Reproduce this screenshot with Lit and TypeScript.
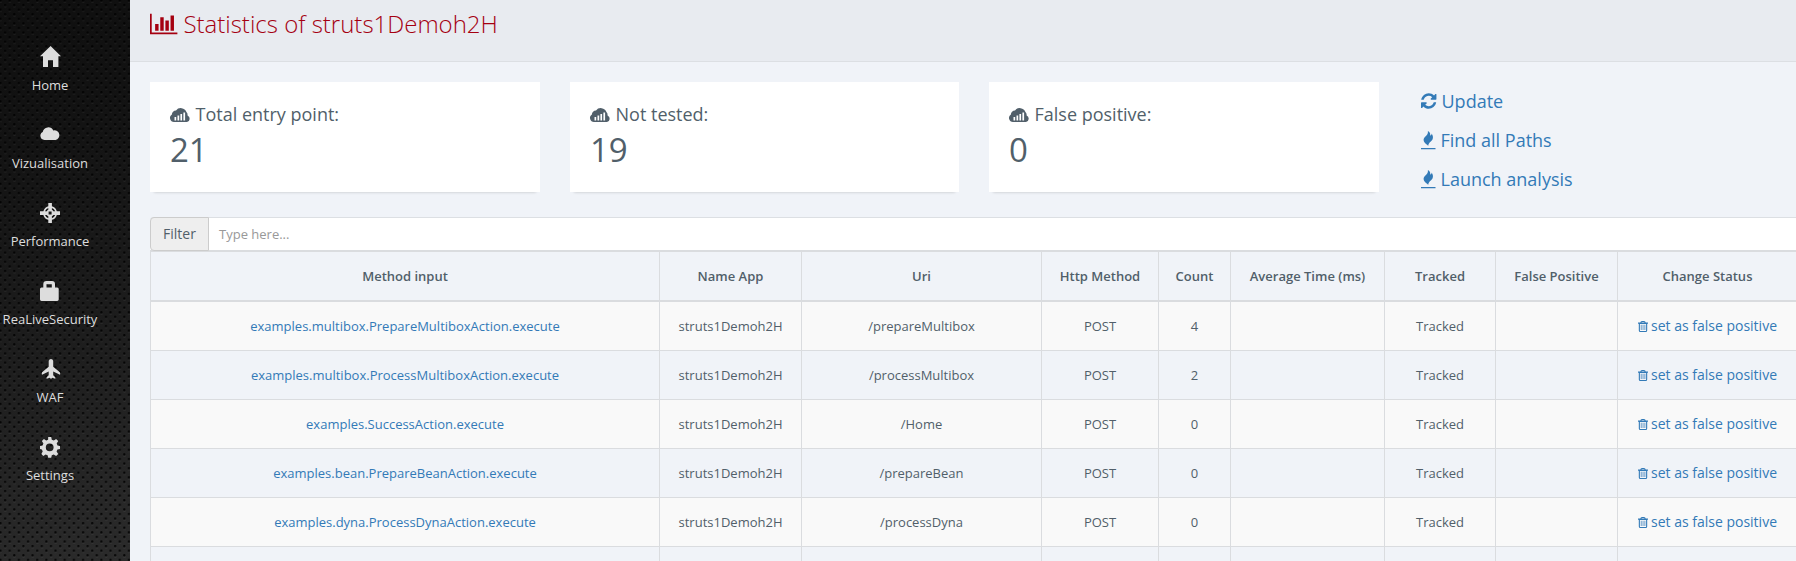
import { LitElement, html, css, svg } from "lit";
import { customElement, property } from "lit/decorators.js";

const icons: Record<string, any> = {
  home: svg`<path d="M10.6 0 L21 10.2 H18.4 V21 H13 V14.2 H8 V21 H3 V10.2 H0 Z"/>`,
  cloud: svg`<path d="M4.4 16 A4.300 4.300 0 0 1 2.700 7.900 A5.700 5.700 0 0 1 13.300 6.400 A4.900 4.900 0 1 1 15.600 16 Z"/>`,
  target: svg`<path fill-rule="evenodd" d="M8.3 0h3.6v3.3a7 7 0 0 1 4.9 4.9H20v3.7h-3.2a7 7 0 0 1-4.9 4.9V20H8.3v-3.2a7 7 0 0 1-4.9-4.9H0V8.2h3.4a7 7 0 0 1 4.9-4.9zM8.3 5a5.4 5.4 0 0 0-3.3 3.2h1.8A3.6 3.6 0 0 1 8.3 6.8zM11.9 5v1.8a3.6 3.6 0 0 1 1.4 1.4h1.9A5.4 5.4 0 0 0 11.9 5zM5 11.9a5.4 5.4 0 0 0 3.3 3.3v-1.9a3.6 3.6 0 0 1-1.5-1.4zM13.3 11.9a3.6 3.6 0 0 1-1.4 1.4v1.9a5.4 5.4 0 0 0 3.3-3.3zM8.6 8.6v3h3v-3z"/>`,
  lock: svg`<path fill-rule="evenodd" d="M3.3 6.5V3.2Q3.3 0 6.5 0H12Q15 0 15 3.2V6.5H17.2Q18.7 6.5 18.7 8V18.6Q18.7 20 17.2 20H1.5Q0 20 0 18.6V8Q0 6.5 1.5 6.5ZM6.5 3.3V6.5H11.8V3.3Z"/>`,
  plane: svg`<path d="M8.7 1.8Q9.2 0 11 0T13.2 1.8V7.8L19.8 13.2Q20.6 14.6 20 15.8L13.2 12.5V16.2L15.3 18.3V19.8L12.2 18.8 11 20 9.8 18.8 6.6 19.8V18.3L8.7 16.2V12.5L2 15.8Q1.4 14.6 2.1 13.2L8.7 7.8Z"/>`,
  cog: svg`<path fill-rule="evenodd" d="M8.2 0h3l.6 2.7 2 .9 2.3-1.6 2.1 2.1-1.5 2.4.8 1.9 2.5.6v3l-2.6.6-.8 2 1.6 2.3-2.1 2.1-2.4-1.500-1.900.8-.6 2.500h-3l-.6-2.600-2-.8-2.300 1.600-2-2.100 1.400-2.400-.8-1.900L0 11.900V9l2.500-.6.9-2-1.500-2.300 2-2 2.300 1.500 1.900-.8zM9.700 6.400a3.800 3.800 0 1 0 0 7.800 3.800 3.800 0 0 0 0-7.800z"/>`,
  chart: svg`<path d="M640 896v512h-256v-512h256zm384-512v1024h-256v-1024h256zm1024 1152v128h-2048v-1536h128v1408h1920zm-640-896v768h-256v-768h256zm384-384v1152h-256v-1152h256z"/>`,
  refresh: svg`<path d="M1639 1056q0 5-1 7-64 268-268 434.500t-478 166.500q-146 0-282.500-55t-243.500-157l-129 129q-19 19-45 19t-45-19-19-45v-448q0-26 19-45t45-19h448q26 0 45 19t19 45-19 45l-137 137q71 66 161 102t187 36q134 0 250-65t186-179q11-17 53-117 8-23 30-23h192q13 0 22.500 9.500t9.500 22.500zm25-800v448q0 26-19 45t-45 19h-448q-26 0-45-19t-19-45 19-45l138-138q-148-137-349-137-134 0-250 65t-186 179q-11 17-53 117-8 23-30 23h-199q-13 0-22.500-9.500t-9.500-22.500v-7q65-268 270-434.500t480-166.500q146 0 284 55.500t245 156.500l130-129q19-19 45-19t45 19 19 45z"/>`,
  cloudbars: svg`<path fill-rule="evenodd" d="M4 15A4 4 0 0 1 1.900 7.600 4 4 0 0 1 6 3.500 6 6 0 0 1 16.400 5 4 4 0 0 1 17.600 8.400 3.500 3.500 0 0 1 17 15ZM4.500 10V13.500H6.200V10ZM7.500 8.500V13.500H9.200V8.500ZM10.400 7V13.500H12.100V7ZM13.400 5.500V13.500H15.100V5.500Z"/>`,
  fire: svg`<path d="M0 17H14.500V18.200H0ZM7.300 14.700C5.500 13.500 2.600 11.500 2.600 8.800 2.600 5.500 7.600 4.800 6.900 0 9.200 1.300 9.600 3 9 4.600 10.500 4.200 10.700 3.400 10.600 2.600 12 4.300 12.300 6.700 11.600 8.300 10.600 10.600 7.500 11.500 7.300 14.700Z"/>`,
  trash: svg`<path fill-rule="evenodd" d="M2.300 1.500Q2.500 0 4 0H6Q7.500 0 7.700 1.500H10V2.700H9.200V9.500Q9.200 11 7.700 11H2.300Q.8 11 .8 9.500V2.700H0V1.500ZM3.400 1.500H6.600Q6.500 1 6 1H4Q3.500 1 3.400 1.500ZM1.900 2.900V9.400Q1.900 9.900 2.400 9.900H7.600Q8.100 9.900 8.100 9.400V2.900Z"/><path opacity=".65" d="M2.700 3.800H3.800V9H2.700ZM4.500 3.800H5.600V9H4.500ZM6.300 3.800H7.400V9H6.300Z"/>`,
};

@customElement("ui-icon")
export class UiIcon extends LitElement {
  @property() name = "";
  @property() box = "0 0 20 20";
  static styles = css`
    :host { display: block; flex: none; }
    svg { display: block; width: 100%; height: 100%; fill: currentColor; overflow: visible; }
  `;
  render() {
    return html`<svg viewBox=${this.box} preserveAspectRatio="xMinYMin meet">${icons[this.name]}</svg>`;
  }
}

@customElement("side-nav")
export class SideNav extends LitElement {
  static styles = css`
    :host { display: block; position: relative; width: 130px; height: 561px; overflow: hidden;
      background: linear-gradient(165deg, #0f0f0f 0%, #131313 25%, #1d1d1d 60%, #2b2b2b 100%); }
    .mesh { position: absolute; inset: 0; width: 130px; height: 561px; }
    nav { position: relative; width: 100px; padding-top: 46px; display: flex; flex-direction: column; color: #ddd; }
    .item { height: 78px; display: flex; flex-direction: column; align-items: center; }
    ui-icon { width: 20px; height: 20px; }
    .label { margin-top: 9px; font-size: 13px; line-height: 20px; white-space: nowrap; }
  `;
  items = [
    ["home", "Home", "0 0 20 20"],
    ["cloud", "Vizualisation", "0 0 20 20"],
    ["target", "Performance", "0 -1 20 20"],
    ["lock", "ReaLiveSecurity", "0 -1 20 20"],
    ["plane", "WAF", "0 -1 20 20"],
    ["cog", "Settings", "0 -1 20 20"],
  ];
  render() {
    return html`
      <svg class="mesh">
        <defs>
          <pattern id="holes" x="3" y="3" width="9.170" height="9.170" patternUnits="userSpaceOnUse">
            <rect x="1.300" y="3.200" width="2" height="1.200" fill="#fff" opacity=".07"/>
            <rect x="5.900" y="7.800" width="2" height="1.200" fill="#fff" opacity=".07"/>
            <rect x="1" y="1" width="2.200" height="2.200" rx=".8" fill="#000" opacity=".85"/>
            <rect x="5.600" y="5.600" width="2.200" height="2.200" rx=".8" fill="#000" opacity=".85"/>
          </pattern>
        </defs>
        <rect width="130" height="561" fill="url(#holes)"/>
      </svg>
      <nav>
        ${this.items.map(([i, t, b]) => html`<div class="item"><ui-icon name=${i} box=${b}></ui-icon><span class="label">${t}</span></div>`)}
      </nav>`;
  }
}

@customElement("app-root")
export class AppRoot extends LitElement {
  static styles = css`
    :host { display: grid; grid-template-columns: 130px 1666px; width: 1796px; height: 561px; overflow: hidden;
      background: #f0f3f8; color: #515f6a; font-family: "Open Sans", sans-serif; font-size: 13px; }
    * { box-sizing: border-box; }
    header { height: 62px; background: #e8ebf0; border-bottom: 1px solid #dcdfe3; padding: 7px 20px 0; display: flex; gap: 6px; color: #a50010; }
    header ui-icon { width: 27.400px; height: 24px; margin-top: 5px; }
    h1 { margin: 0; font-size: 24px; font-weight: 300; line-height: 34px; white-space: nowrap; }
    .stats { display: grid; grid-template-columns: 390px 389px 390px 300px; column-gap: 30px; padding: 20px 0 0 20px; height: 155px; }
    .card { background: #fff; height: 110px; padding: 19px 20px; box-shadow: 0 4px 3px -4px rgba(0, 0, 0, .22); }
    .title { display: flex; align-items: center; gap: 5px; font-size: 18px; line-height: 26px; }
    .title ui-icon { width: 20.500px; height: 15px; }
    .value { margin-top: 1px; font-size: 33px; line-height: 44px; }
    .actions { margin-top: -1px; padding: 0 0 0 12px; display: flex; flex-direction: column; color: #337ab7; font-size: 18px; }
    .action { height: 39px; display: flex; align-items: center; gap: 5px; }
    .action .refresh { width: 15.500px; height: 18px; }
    .action .fire { width: 14.500px; height: 18px; }
    .main { min-width: 0; }
    .sheet { margin-left: 20px; width: 1648px; }
    .filter { display: flex; height: 34px; background: #fff; border-top: 1px solid #dcdfe3; border-bottom: 1px solid #dadcdf; border-radius: 4px 0 0 0; }
    .addon { width: 59px; margin: -1px 0; background: #eee; border: 1px solid #ccc; border-radius: 4px 0 0 4px; font-size: 14px; line-height: 32px; padding-left: 12px; }
    .input { padding-left: 10px; line-height: 33px; color: #999; font-size: 13px; }
    table { width: 1648px; table-layout: fixed; border-collapse: collapse; text-align: center; }
    th, td { border: 1px solid #dadcdf; padding: 0; height: 49px; line-height: 20px; white-space: nowrap; }
    th { font-weight: 600; height: 49px; padding-top: 1px; border-bottom-width: 2px; }
    tbody tr:first-child td { height: 50px; }
    tbody tr:nth-child(odd) { background: #f9f9f9; }
    .link { color: #337ab7; }
    .status { display: flex; justify-content: center; gap: 3px; color: #337ab7; font-size: 14px; }
    .status ui-icon { width: 10px; height: 11px; margin-top: 5px; }
    .w0 { width: 509px; } .w1 { width: 142px; } .w2 { width: 240px; } .w3 { width: 117px; } .w4 { width: 72px; }
    .w5 { width: 154px; } .w6 { width: 111px; } .w7 { width: 122px; } .w8 { width: 180px; }
  `;
  cards = [["Total entry point:", "21"], ["Not tested:", "19"], ["False positive:", "0"]];
  heads = ["Method input", "Name App", "Uri", "Http Method", "Count", "Average Time (ms)", "Tracked", "False Positive", "Change Status"];
  rows = [
    ["examples.multibox.PrepareMultiboxAction.execute", "/prepareMultibox", "4"],
    ["examples.multibox.ProcessMultiboxAction.execute", "/processMultibox", "2"],
    ["examples.SuccessAction.execute", "/Home", "0"],
    ["examples.bean.PrepareBeanAction.execute", "/prepareBean", "0"],
    ["examples.dyna.ProcessDynaAction.execute", "/processDyna", "0"],
  ];
  render() {
    return html`
      <side-nav></side-nav>
      <div class="main">
        <header><ui-icon name="chart" box="0 0 2048 1792"></ui-icon><h1>Statistics of struts1Demoh2H</h1></header>
        <div class="stats">
          ${this.cards.map(([t, v]) => html`<div class="card">
            <div class="title"><ui-icon name="cloudbars" box="0 0 20.500 15"></ui-icon><span>${t}</span></div>
            <div class="value">${v}</div>
          </div>`)}
          <div class="actions">
            <div class="action"><ui-icon class="refresh" name="refresh" box="128 0 1536 1792"></ui-icon><span>Update</span></div>
            <div class="action"><ui-icon class="fire" name="fire" box="0 0 14.500 18"></ui-icon><span>Find all Paths</span></div>
            <div class="action"><ui-icon class="fire" name="fire" box="0 0 14.500 18"></ui-icon><span>Launch analysis</span></div>
          </div>
        </div>
        <div class="sheet">
          <div class="filter"><div class="addon">Filter</div><div class="input">Type here...</div></div>
          <table>
            <colgroup>${this.heads.map((_, i) => html`<col class="w${i}">`)}</colgroup>
            <thead><tr>${this.heads.map((h) => html`<th>${h}</th>`)}</tr></thead>
            <tbody>
              ${this.rows.map(([m, u, c]) => html`<tr>
                <td class="link">${m}</td><td>struts1Demoh2H</td><td>${u}</td><td>POST</td><td>${c}</td><td></td><td>Tracked</td><td></td>
                <td><div class="status"><ui-icon name="trash" box="0 0 10 11"></ui-icon><span>set as false positive</span></div></td>
              </tr>`)}
              <tr>${this.heads.map(() => html`<td></td>`)}</tr>
            </tbody>
          </table>
        </div>
      </div>`;
  }
}
